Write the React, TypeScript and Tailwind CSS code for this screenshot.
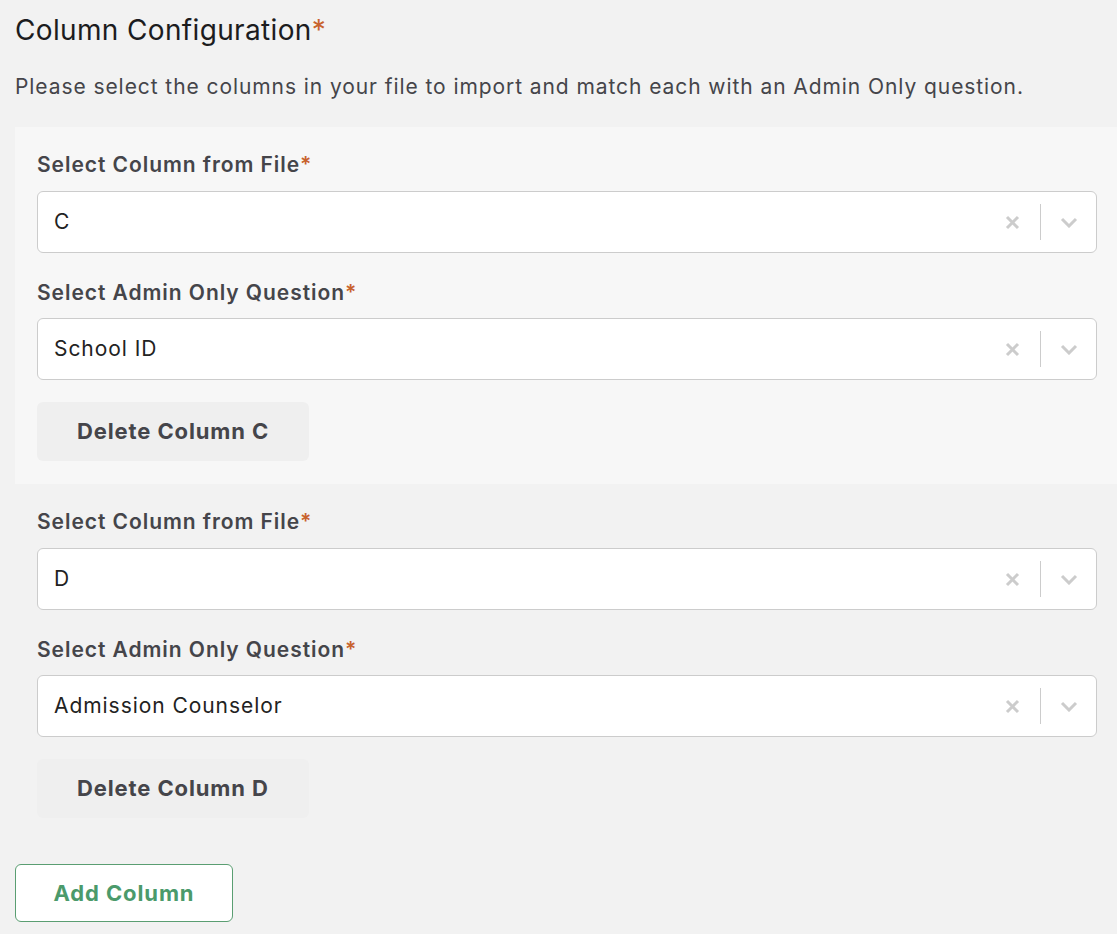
import React from "react";

const font = { fontFamily: "Inter, 'Noto Sans', sans-serif" };

function SelectBox({ value }: { value: string }) {
  return (
    <div className="flex h-[62px] items-center rounded-[6px] border border-[#cccccc] bg-white">
      <div className="flex-1 pl-[16px] text-[21px] tracking-[0.045em] text-[#222222]">{value}</div>
      <div className="flex items-center">
        <div className="flex h-[36px] w-[55px] items-center justify-center">
          <svg width="15" height="15" viewBox="0 0 15 15">
            <path d="M2 2 L13 13 M13 2 L2 13" stroke="#cccccc" strokeWidth="3" />
          </svg>
        </div>
        <div className="h-[36px] w-px bg-[#cccccc]" />
        <div className="flex h-[36px] w-[55px] items-center justify-center">
          <svg width="18" height="11" viewBox="0 0 18 11">
            <path d="M2 2 L9 9 L16 2" stroke="#cccccc" strokeWidth="3" fill="none" />
          </svg>
        </div>
      </div>
    </div>
  );
}

function Label({ text }: { text: string }) {
  return (
    <div className="text-[21px] font-semibold leading-[24px] tracking-[0.045em] text-[#45454a]">
      {text}
      <span className="text-[#c8622d]">*</span>
    </div>
  );
}

function Group({ col, question, shaded }: { col: string; question: string; shaded: boolean }) {
  return (
    <div className={`pl-[22px] pr-[20px] pt-[26px] pb-[23px] ${shaded ? "bg-[#f7f7f7]" : ""}`}>
      <Label text="Select Column from File" />
      <div className="mt-[14px]">
        <SelectBox value={col} />
      </div>
      <div className="mt-[28px]">
        <Label text="Select Admin Only Question" />
      </div>
      <div className="mt-[13px]">
        <SelectBox value={question} />
      </div>
      <button className="mt-[22px] flex h-[59px] items-center rounded-[6px] bg-[#efefef] px-[40px] text-[22px] font-bold tracking-[0.04em] text-[#45454a]">
        Delete Column {col}
      </button>
    </div>
  );
}

export default function App() {
  return (
    <div className="min-h-[934px] bg-[#f2f2f2] pl-[15px] pt-[12px]" style={font}>
      <h1 className="text-[28px] leading-[36px] tracking-[0.0125em] text-[#1c1c1e]">
        Column Configuration<span className="text-[#c8622d]">*</span>
      </h1>
      <p className="mt-[26px] text-[21px] leading-[26px] tracking-[0.044em] text-[#45454a]">
        Please select the columns in your file to import and match each with an Admin Only question.
      </p>
      <div className="mt-[27px]">
        <Group col="C" question="School ID" shaded={true} />
        <Group col="D" question="Admission Counselor" shaded={false} />
      </div>
      <button className="mt-[23px] flex h-[58px] w-[218px] items-center justify-center rounded-[6px] border border-[#5a9e72] bg-white text-[22px] font-bold tracking-[0.04em] text-[#4b9a6b]">
        Add Column
      </button>
    </div>
  );
}
